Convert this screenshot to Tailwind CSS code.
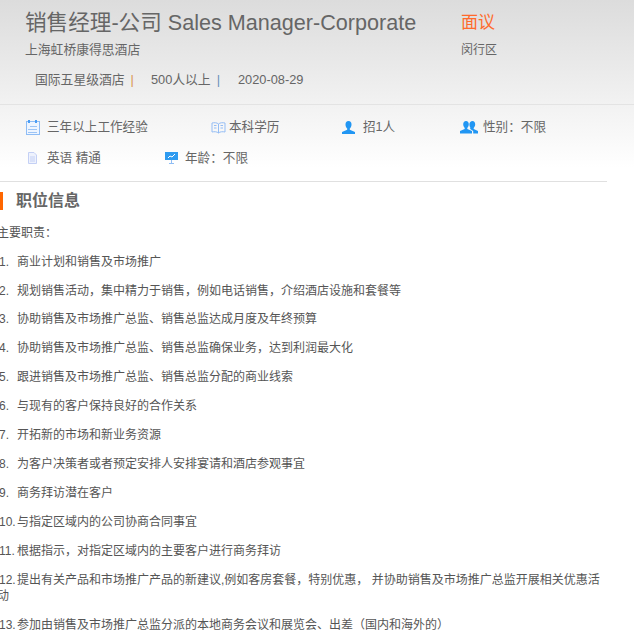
<!DOCTYPE html>
<html lang="en">
<head>
    <meta charset="UTF-8">
    <title>销售经理-公司</title>
    <script src="https://cdn.jsdelivr.net/npm/@tailwindcss/browser@4"></script>
</head>
<body class="bg-white overflow-hidden h-[640px] text-[#666] font-['Liberation_Sans','Noto_Sans_CJK_SC',sans-serif]">
    <!-- Header -->
    <div class="h-[182px] w-full bg-gradient-to-b from-[#dcdcdc] to-white to-[92%]">
        <div class="flex pl-[25px] pt-[10px] h-[105px] w-full border-b border-[#e3e3e3]">
            <div class="w-[436px]">
                <h1 class="text-[21.6px] leading-[26px] text-[#666]">销售经理-公司 Sales Manager-Corporate</h1>
                <p class="text-[12.8px] leading-[16px] mt-[6px]">上海虹桥康得思酒店</p>
                <div class="flex text-[12.8px] leading-[16px] mt-[14px] pl-[10px]">
                    <span>国际五星级酒店<span class="text-[#d9954f] ml-[6px]">|</span></span>
                    <span class="ml-[17px]">500人以上<span class="text-[#6a90b8] ml-[6px]">|</span></span>
                    <span class="ml-[18px]">2020-08-29</span>
                </div>
            </div>
            <div>
                <p class="text-[17px] leading-[26px] text-[#ff6a2b]">面议</p>
                <p class="text-[12px] leading-[16px] mt-[6px]">闵行区</p>
            </div>
        </div>
        <!-- Requirements -->
        <div class="flex flex-wrap content-start w-[607px] h-[77px] pl-[25px] text-[12.6px] leading-[18px] text-[#666] border-b border-[#e0e0e0]">
            <div class="flex items-center h-[44px] w-[186px] gap-[7px]">
                <svg width="15" height="15" viewBox="0 0 15 15" fill="none"><rect x="1.500" y="1.500" width="13" height="13" fill="#eef5ff" stroke="#8fbdf5"/><rect x="3" y="0" width="2" height="3" fill="#4a9df5"/><rect x="10" y="0" width="2" height="3" fill="#4a9df5"/><path d="M5 6.500h7M3 9.500h9M3 12.500h9" stroke="#9cc4f5"/></svg>
                <span>三年以上工作经验</span>
            </div>
            <div class="flex items-center h-[44px] w-[131px] gap-[3px]">
                <svg width="15" height="13" viewBox="0 0 15 13" fill="none" stroke="#94bdf5"><path d="M7.500 3C6 1.500 3 1.500 1 2v9c2-.5 5-.5 6.500 1 1.500-1.500 4.500-1.500 6.500-1V2c-2-.5-5-.5-6.500 1zM7.500 3v9M3 4.500h2.500M3 7h2.500M9.500 4.500H12M9.500 7H12"/></svg>
                <span>本科学历</span>
            </div>
            <div class="flex items-center h-[44px] w-[118px] gap-[8px]">
                <svg width="13" height="13" viewBox="0 0 13 13" fill="#2196f3"><path d="M6.500 0C8.500 0 9.500 1.500 9.500 3.500 9.500 5.500 8.500 7 7.800 7.600v1.200L13 11v2H0v-2l5.200-2.200V7.600C4.500 7 3.500 5.500 3.500 3.500 3.500 1.500 4.500 0 6.500 0z"/></svg>
                <span>招1人</span>
            </div>
            <div class="flex items-center h-[44px] w-[120px] gap-[5px]">
                <svg width="18" height="14" viewBox="0 0 18 14" fill="#2196f3"><path d="M6 1c1.800 0 2.800 1.400 2.800 3.200 0 1.800-.9 3.100-1.500 3.700v1L12 11v2.500H0V11l4.700-2.100v-1C4.100 7.300 3.200 6 3.200 4.200 3.200 2.400 4.200 1 6 1z"/><path d="M12.500 1c1.700 0 2.700 1.400 2.700 3.200 0 1.800-.9 3.100-1.500 3.700v1L18 11v2.500h-4.800V11l-3.400-2.300c.3-.2.700-.5.700-.8-.5-.6-1.100-2-1.100-3.700C9.400 2.400 10.800 1 12.500 1z"/></svg>
                <span>性别：不限</span>
            </div>
            <div class="flex items-center h-[17px] w-[140px] gap-[7px]">
                <svg class="ml-[3px] mr-[3px]" width="9" height="12" viewBox="0 0 9 12" fill="#eef2fd" stroke="#c4d0f5"><path d="M.5.500h5.500l2.500 2.500v8.500H.500zM2 5h5M2 7h5M2 9h5"/></svg>
                <span>英语 精通</span>
            </div>
            <div class="flex items-center h-[17px] w-[200px] gap-[7px]">
                <svg width="13" height="13" viewBox="0 0 13 13"><rect x="0" y="1" width="13" height="8" fill="#2f9bf0"/><path d="M3 7l2-2 2 1 3-3" stroke="#fff" fill="none"/><path d="M6.500 9v3M4 12.500h5" stroke="#8fbdf5"/></svg>
                <span>年龄：不限</span>
            </div>
        </div>
    </div>

    <!-- Job info -->
    <div class="flex items-center h-[18px] mt-[10px]">
        <div class="w-[3px] h-[18px] bg-[#ff6600]"></div>
        <h2 class="ml-[13px] text-[16px] font-bold text-[#666]">职位信息</h2>
    </div>
    <div class="-ml-[3px] w-[604px] text-[12px] leading-[16px] text-[#555]">
        <p class="mt-[15px]">主要职责：</p>
        <p class="mt-[13px]"><span class="inline-block w-[18px] ml-[2px]">1.</span>商业计划和销售及市场推广</p>
        <p class="mt-[13px]"><span class="inline-block w-[18px] ml-[2px]">2.</span>规划销售活动，集中精力于销售，例如电话销售，介绍酒店设施和套餐等</p>
        <p class="mt-[12px]"><span class="inline-block w-[18px] ml-[2px]">3.</span>协助销售及市场推广总监、销售总监达成月度及年终预算</p>
        <p class="mt-[13px]"><span class="inline-block w-[18px] ml-[2px]">4.</span>协助销售及市场推广总监、销售总监确保业务，达到利润最大化</p>
        <p class="mt-[13px]"><span class="inline-block w-[18px] ml-[2px]">5.</span>跟进销售及市场推广总监、销售总监分配的商业线索</p>
        <p class="mt-[13px]"><span class="inline-block w-[18px] ml-[2px]">6.</span>与现有的客户保持良好的合作关系</p>
        <p class="mt-[13px]"><span class="inline-block w-[18px] ml-[2px]">7.</span>开拓新的市场和新业务资源</p>
        <p class="mt-[13px]"><span class="inline-block w-[18px] ml-[2px]">8.</span>为客户决策者或者预定安排人安排宴请和酒店参观事宜</p>
        <p class="mt-[13px]"><span class="inline-block w-[18px] ml-[2px]">9.</span>商务拜访潜在客户</p>
        <p class="mt-[13px]"><span class="inline-block w-[18px] ml-[2px]">10.</span>与指定区域内的公司协商合同事宜</p>
        <p class="mt-[13px]"><span class="inline-block w-[18px] ml-[2px]">11.</span>根据指示，对指定区域内的主要客户进行商务拜访</p>
        <p class="mt-[13px]"><span class="inline-block w-[18px] ml-[2px]">12.</span>提出有关产品和市场推广产品的新建议,例如客房套餐，特别优惠， 并协助销售及市场推广总监开展相关优惠活动</p>
        <p class="mt-[13px]"><span class="inline-block w-[18px] ml-[2px]">13.</span>参加由销售及市场推广总监分派的本地商务会议和展览会、出差（国内和海外的）</p>
    </div>
</body>
</html>
